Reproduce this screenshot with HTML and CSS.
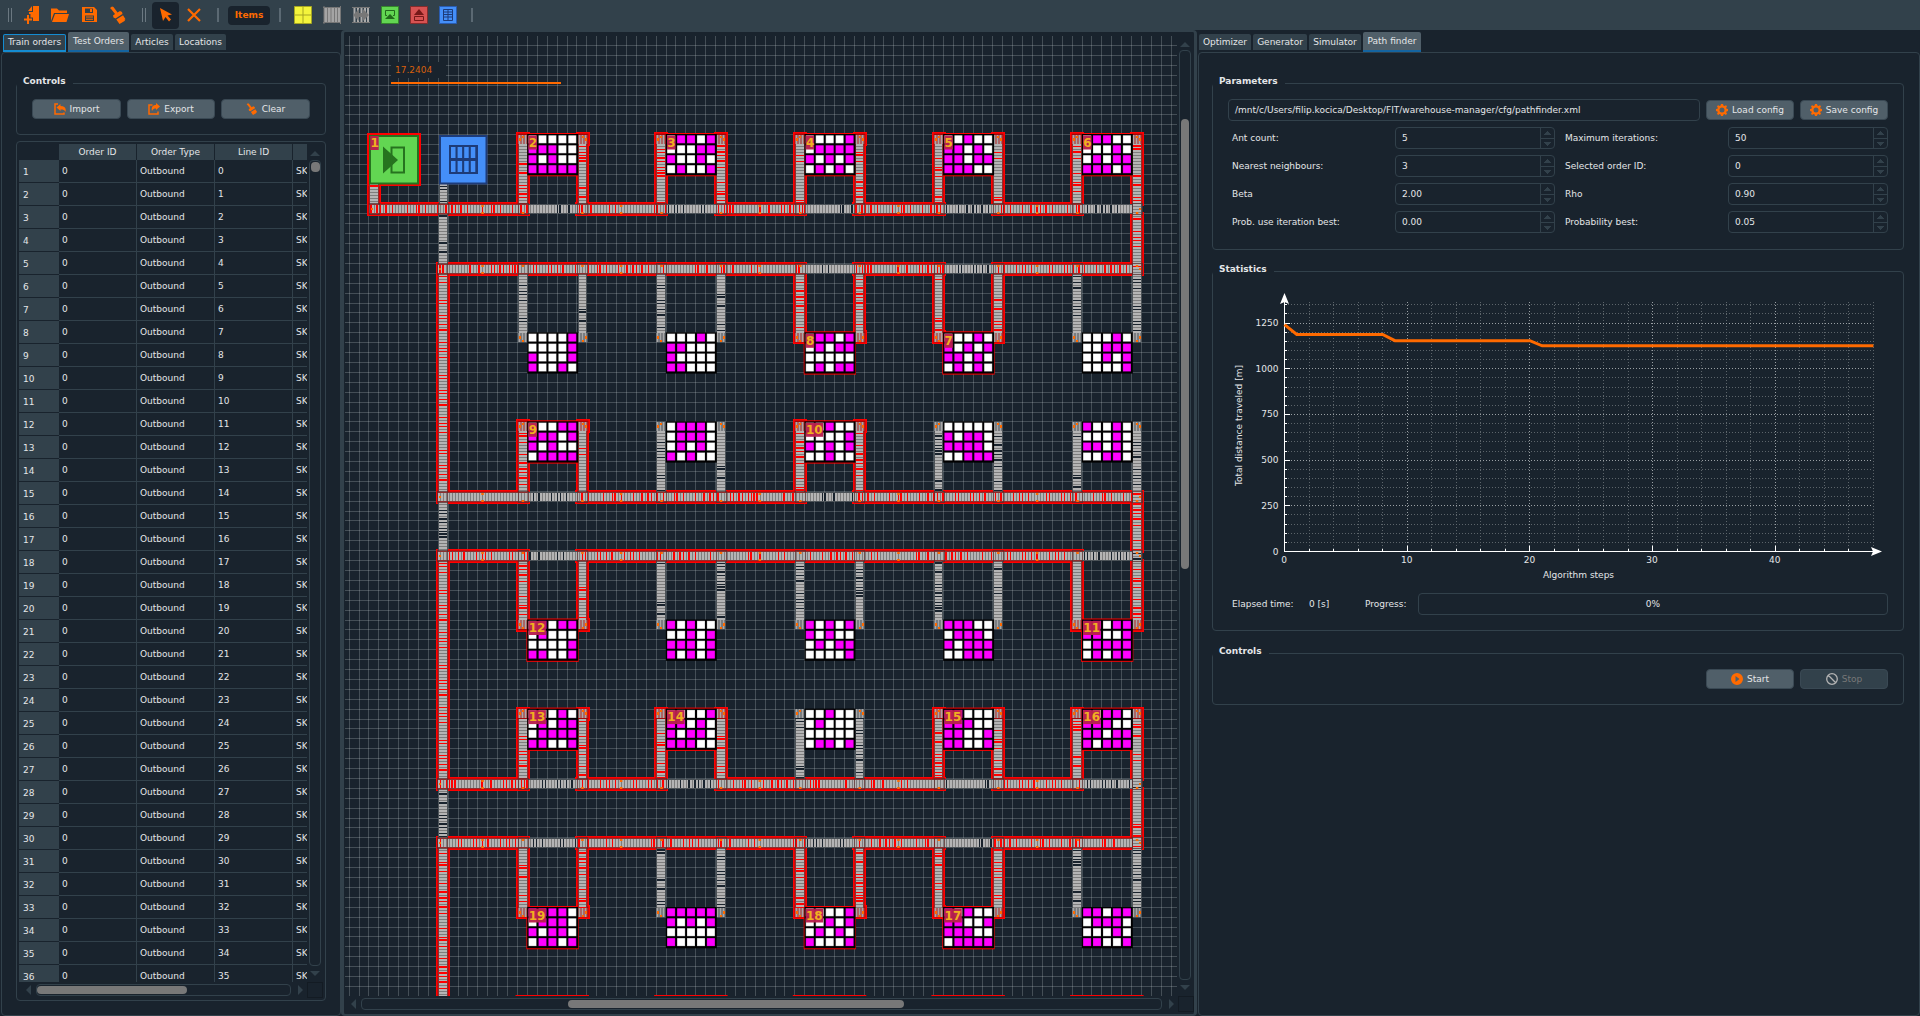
FILE: index.html
```html
<!DOCTYPE html>
<html lang="en">
<head>
<meta charset="utf-8">
<title>Warehouse manager</title>
<link rel="stylesheet" href="styles.css">
</head>
<body>
<svg class="defs" width="0" height="0">
  <symbol id="brush" viewBox="0 0 18 18"><path d="M1 2l2-1.500 1.500.5 4 5.500L11 5l2 1 .5 2-7 4.500-2-1-.5-2 2-1.500-3.500-4.500zM7.300 13.400l6.700-4.200 2.500 4-1 .5.500 1-5.500 3.300z"/></symbol>
  <symbol id="gear" viewBox="0 0 12 12"><path fill-rule="evenodd" d="M5 0h2l.4 1.600 1 .4L10 1.200 11 2.300 10.200 3.800l.3.900L12 5v2l-1.500.4-.3.900.8 1.500-1.100 1.100-1.500-.8-1 .3L7 12H5l-.4-1.600-1-.3-1.500.8L1 9.800l.8-1.500-.3-.9L0 7V5l1.500-.3.3-.9L1 2.300 2.100 1.200 3.600 2l1-.4zM6 3.500a2.500 2.500 0 100 5 2.500 2.500 0 000-5z"/></symbol>
</svg>

<header class="toolbar">
  <i class="grip"></i>
  <svg class="tool new" viewBox="0 0 18 18"><path d="M9 0h6v15H9v-3.500H6.500V8H5V6h4zM8 0v5H4zM3 9h2v3.500h3v2H5V18H3v-3.500H0v-2h3z"/></svg>
  <svg class="tool open" viewBox="0 0 18 18"><path d="M0 15V2.500h6l2 2h8V7H3zM4 8h14l-2.500 8H1z"/></svg>
  <svg class="tool save" viewBox="0 0 18 18"><path fill-rule="evenodd" d="M1 1h12l3 3v12H1zM4 2.500V7h8V2.500zM4 9.500V15h9V9.500z"/><path d="M9 3h2v3H9zM5 10.500h7v1H5zM5 12.700h7v1H5z"/></svg>
  <svg class="tool clean"><use href="#brush"/></svg>
  <i class="grip second"></i>
  <span class="picked"><svg viewBox="0 0 14 14"><path d="M1 0l12 6.500-4.500 1 3.500 4-2 2L6.500 9 4 13z"/></svg></span>
  <svg class="tool cross" viewBox="0 0 18 18"><path class="stroke" d="M3 3l12 12M15 3L3 15"/></svg>
  <i class="bar"></i>
  <span class="items">Items</span>
  <i class="bar after"></i>
  <div class="palette">
    <svg viewBox="0 0 18 18"><path fill="#f4f43c" stroke="#a6a623" d="M.5.500h17v17H.5z"/><path stroke="#a6a623" d="M9 0v18M0 9h18"/></svg>
    <svg viewBox="0 0 18 18"><path fill="#a4a4a4" d="M1 1h16v16H1z"/><path stroke="#777" d="M0 1.500h18M0 16.500h18M1 0v18M4.500 1v16M8 1v16M11.500 1v16M14.500 1v16M17.500 0v18"/></svg>
    <svg viewBox="0 0 18 18"><path stroke="#aaa" stroke-width="2" d="M2.500 1v16M6 1v16M9.500 1v16M13 1v16M16 1v16"/><path stroke="#777" d="M0 1.500h18M0 16.500h18"/><path fill="#777" d="M1 9l6-6v4h4V3l6 6-6 6v-4H7v4z"/></svg>
    <svg viewBox="0 0 18 18"><path fill="#62d652" stroke="#35862c" d="M.5.500h17v17H.5z"/><path fill="#226b1b" d="M4 13l5-5 5 5z"/><path fill="none" stroke="#226b1b" d="M6 9.500H4.500v-5h9v5H12"/></svg>
    <svg viewBox="0 0 18 18"><path fill="#d65252" stroke="#862c2c" d="M.5.500h17v17H.5z"/><path fill="#761818" d="M4 9l5-6 5 6z"/><path fill="none" stroke="#761818" d="M4.500 10.500h9v4h-9z"/></svg>
    <svg viewBox="0 0 18 18"><path fill="#448ff8" stroke="#2a5cb0" d="M.5.500h17v17H.5z"/><path fill="none" stroke="#1d3b78" d="M4.500 3.500h9v11h-9zM9 3.500v11M4 6h10M4 8.500h10M4 11h10"/></svg>
  </div>
  <i class="bar last"></i>
</header>

<main class="workspace">
  <section class="side">
    <nav class="tabs">
      <span class="tab focused">Train orders</span><span class="tab active test">Test Orders</span><span class="tab articles">Articles</span><span class="tab locations">Locations</span>
    </nav>
    <div class="pane">
      <div class="group io">
        <h2>Controls</h2>
        <div class="io-row">
          <button class="btn"><svg viewBox="0 0 12 12"><path fill="none" stroke="#ff6a00" stroke-width="1.500" d="M4 1H1v10h9V9.500"/><path d="M2.500 4.500L6.500 1v2c4 0 6 2 5 6-1-2-2-2.500-5-2.500V8z"/></svg>Import</button>
          <button class="btn mid"><svg viewBox="0 0 12 12"><path fill="none" stroke="#ff6a00" stroke-width="1.500" d="M4.500 2H1v9h9V8.500"/><path d="M12 3.500L8 0v2C5 2 3 4 4 8c1-2 2-2.500 4-2.500V7z"/></svg>Export</button>
          <button class="btn"><svg><use href="#brush"/></svg>Clear</button>
        </div>
      </div>
      <div class="table-frame">
        <div class="table-top">
          <div class="viewport">
            <table class="orders">
              <colgroup><col class="c-num"><col class="c-id"><col class="c-type"><col class="c-line"><col class="c-sku"></colgroup>
              <thead><tr><th class="corner"></th><th>Order ID</th><th>Order Type</th><th>Line ID</th><th></th></tr></thead>
              <tbody id="orders"></tbody>
            </table>
          </div>
          <div class="scroll vertical"><i class="arrow up"></i><div class="groove"><b class="thumb dot"></b></div><i class="arrow down"></i></div>
        </div>
        <div class="scroll-row"><div class="scroll horizontal"><i class="arrow left"></i><div class="groove"><b class="thumb wide"></b></div><i class="arrow right"></i></div><i class="corner-box"></i></div>
      </div>
    </div>
  </section>

  <section class="view">
    <div class="view-top">
      <svg id="map" class="map" viewBox="345 36 832 960"></svg>
      <div class="scroll vertical"><i class="arrow up"></i><div class="groove"><b class="thumb tall"></b></div><i class="arrow down"></i></div>
    </div>
    <div class="scroll-row"><div class="scroll horizontal"><i class="arrow left"></i><div class="groove"><b class="thumb long"></b></div><i class="arrow right"></i></div><i class="corner-box"></i></div>
  </section>

  <section class="tools">
    <nav class="tabs">
      <span class="tab t-opt">Optimizer</span><span class="tab t-gen">Generator</span><span class="tab t-sim">Simulator</span><span class="tab active t-path">Path finder</span>
    </nav>
    <div class="pane">
      <div class="group params">
        <h2>Parameters</h2>
        <div class="config">
          <div class="path">/mnt/c/Users/filip.kocica/Desktop/FIT/warehouse-manager/cfg/pathfinder.xml</div>
          <button class="btn"><svg><use href="#gear"/></svg>Load config</button>
          <button class="btn"><svg><use href="#gear"/></svg>Save config</button>
        </div>
        <div class="fields">
          <label>Ant count:</label><div class="spin">5<i></i></div><label>Maximum iterations:</label><div class="spin">50<i></i></div>
          <label>Nearest neighbours:</label><div class="spin">3<i></i></div><label>Selected order ID:</label><div class="spin">0<i></i></div>
          <label>Beta</label><div class="spin">2.00<i></i></div><label>Rho</label><div class="spin">0.90<i></i></div>
          <label>Prob. use iteration best:</label><div class="spin">0.00<i></i></div><label>Probability best:</label><div class="spin">0.05<i></i></div>
        </div>
      </div>
      <div class="group stats">
        <h2>Statistics</h2>
        <svg id="chart" class="chart" viewBox="1228 285 660 300"></svg>
        <div class="status"><span class="elapsed">Elapsed time:</span><span class="secs">0 [s]</span><span>Progress:</span><div class="progress">0%</div></div>
      </div>
      <div class="group run">
        <h2>Controls</h2>
        <div class="run-row">
          <button class="btn"><svg viewBox="0 0 12 12"><path fill-rule="evenodd" d="M6 0a6 6 0 100 12A6 6 0 006 0zM4.500 3l4 3-4 3z"/></svg>Start</button>
          <button class="btn off"><svg viewBox="0 0 12 12"><path fill="none" stroke="#b4b4b4" stroke-width="1.300" d="M6 .7a5.300 5.300 0 100 10.600A5.300 5.300 0 006 .7zM2.300 2.300l7.400 7.400"/></svg>Stop</button>
        </div>
      </div>
    </div>
  </section>
</main>
<script src="app.js"></script>
</body>
</html>
```
FILE: styles.css
```css
* { box-sizing: border-box; }
body {
  margin: 0; width: 1920px; height: 1016px; overflow: hidden;
  display: flex; flex-direction: column;
  background: #19232d; color: #e4e6e8;
  font: 9px/11px "DejaVu Sans", Verdana, sans-serif;
}
svg { display: block; flex: none; }
.defs { position: absolute; }

.toolbar { height: 30px; flex: none; display: flex; align-items: center; background: #32414b; fill: #ff6a00; }
.grip { width: 4px; height: 14px; margin-left: 8px; border: solid #6b7881; border-width: 0 1px; }
.grip.second { margin-left: 15px; }
.tool { width: 18px; height: 18px; }
.tool.new { margin-left: 12px; }
.tool.open { margin-left: 9px; }
.tool.save { margin-left: 12px; }
.tool.clean { margin-left: 10px; }
.tool.cross { margin-left: 6px; }
.stroke { stroke: #ff6a00; stroke-width: 2.200; fill: none; }
.picked { width: 27px; height: 27px; margin-left: 6px; border-radius: 4px; background: #19232d; padding: 6px 0 0 7px; }
.picked svg { width: 14px; height: 14px; }
.bar { width: 2px; height: 14px; margin-left: 14px; background: #5b6973; }
.bar.after { margin-left: 9px; }
.bar.last { margin-left: 14px; }
.items { width: 42px; height: 19px; margin: 1px 0 0 9px; border-radius: 4px; background: #19232d; color: #ff6a00; font-weight: bold; line-height: 19px; text-align: center; }
.palette { display: flex; gap: 11px; margin-left: 13px; }
.palette svg { width: 18px; height: 18px; }

.workspace { flex: 1; display: flex; min-height: 0; }
.side { width: 341px; padding-left: 1px; display: flex; flex-direction: column; }
.tabs { height: 22px; flex: none; display: flex; align-items: flex-start; padding: 4px 0 0 1px; gap: 2px; }
.side .tabs { padding-left: 2px; }
.tab { height: 16px; background: #32414b; border-radius: 2px 2px 0 0; line-height: 16px; text-align: center; width: 52px; white-space: nowrap; }
.tab.active { height: 20px; margin-top: -2px; line-height: 18px; background: #505f69; border-bottom: 2px solid #1464a0; }
.tab.focused { height: 18px; width: 63px; line-height: 14px; border: 1px solid #148cd2; border-bottom-width: 2px; }
.tab.test { width: 61px; }
.tab.articles { width: 42px; }
.tab.locations { width: 51px; }
.t-gen { width: 54px; }
.t-path { width: 58px; }
.pane { flex: 1; border: 1px solid #32414b; border-radius: 4px; min-height: 0; }

.group { border: 1px solid #32414b; border-radius: 4px; }
.group h2 { margin: -8px 0 0; padding: 0 7px 0 6px; width: fit-content; background: #19232d; font: bold 9px/11px "DejaVu Sans", Verdana, sans-serif; }
.btn { display: flex; align-items: center; justify-content: center; gap: 4px; height: 20px; padding: 0; background: #505f69; border: 1px solid #3a4954; border-radius: 4px; color: #e4e6e8; font: inherit; fill: #ff6a00; white-space: nowrap; }
.btn svg { width: 12px; height: 12px; }
.btn.off { background: #32414b; color: #787878; }

.io { margin: 30px 14px 0 14px; height: 52px; }
.io-row { display: grid; grid-template-columns: 89px 88px 89px; gap: 6px; padding: 12px 0 0 15px; }
.table-frame { margin: 6px 14px 0 14px; height: 860px; border: 1px solid #32414b; border-radius: 4px; padding: 2px; }
.table-top { display: flex; height: 838px; }
.viewport { width: 288px; overflow: hidden; }
.orders { table-layout: fixed; width: 400px; border-collapse: separate; border-spacing: 0; }
.c-num { width: 40px; } .c-id, .c-type, .c-line { width: 78px; } .c-sku { width: 126px; }
.orders th { height: 16px; padding: 0; background: #32414b; font-weight: normal; border-right: 1px solid #19232d; }
.orders th.corner { background: none; }
.orders td { height: 23px; padding: 0 3px 0 3px; border: solid #32414b; border-width: 0 1px 1px 0; }
.orders td:first-child { background: #32414b; border-right: 0; border-bottom-color: #19232d; padding: 2px 0 0 4px; }

.scroll { display: flex; align-items: center; }
.scroll.vertical { flex-direction: column; width: 16px; }
.scroll.horizontal { flex: 1; }
.scroll-row { display: flex; height: 16px; }
.groove { flex: 1; border: 1px solid #32414b; border-radius: 4px; }
.vertical .groove { width: 12px; }
.horizontal .groove { height: 12px; }
.thumb { display: block; background: #787878; border-radius: 4px; }
.thumb.dot { width: 9px; height: 10px; margin: 1px 0 0 .5px; }
.thumb.wide { width: 150px; height: 8px; margin: 1px 0 0 0; }
.thumb.tall { width: 8px; height: 450px; margin: 68px 0 0 1px; }
.thumb.long { width: 336px; height: 8px; margin: 1px 0 0 206px; }
.arrow { border: 5px solid transparent; flex: none; }
.arrow.up { border-top: 0; border-bottom-color: #32414b; margin: 7px 0 4px; }
.arrow.down { border-bottom: 0; border-top-color: #32414b; margin: 5px 0 6px; }
.arrow.left { border-left: 0; border-right-color: #32414b; margin: 0 5px 0 7px; }
.arrow.right { border-right: 0; border-left-color: #32414b; margin: 0 4px 0 7px; }
.corner-box { width: 16px; height: 16px; border: 1px solid #131b23; }

.view { width: 856px; border: 3px solid #32414b; border-width: 2px 3px 2px 3px; border-radius: 4px; padding: 4px 0 0 1px; }
.view-top { display: flex; height: 960px; }
.map { width: 832px; height: 960px; }
.map text { font: bold 12px "DejaVu Sans", Verdana, sans-serif; fill: #f0b020; }
.map text.measure { font: 9px "DejaVu Sans", Verdana, sans-serif; fill: #d8600c; }
.view .vertical .arrow.up { margin: 6px 0 3px; }
.view .horizontal .arrow.left { margin-left: 6px; }

.tools { flex: 1; padding-left: 1px; display: flex; flex-direction: column; }
.tools .group { margin-left: 13px; width: 692px; }
.params { margin-top: 30px; height: 167px; }
.config { display: grid; grid-template-columns: 472px 88px 88px; gap: 6px; align-items: center; padding: 12px 0 0 15px; }
.path { height: 22px; border: 1px solid #32414b; border-radius: 4px; line-height: 20px; padding-left: 6px; }
.fields { display: grid; grid-template-columns: 163px 160px 173px 160px; row-gap: 6px; padding: 6px 0 0 19px; }
.fields label { line-height: 22px; }
.fields label:nth-child(4n+3) { padding-left: 10px; }
.spin { height: 22px; border: 1px solid #32414b; border-radius: 4px; line-height: 20px; padding-left: 6px; display: flex; justify-content: space-between; }
.spin i { width: 14px; border-left: 1px solid #32414b; background:
  linear-gradient(#32414b, #32414b) 0 10px / 14px 1px no-repeat,
  conic-gradient(from 139deg at 50% 0, #32414b 82deg, transparent 0) 3px 3px / 7px 4px no-repeat,
  conic-gradient(from -41deg at 50% 100%, #32414b 82deg, transparent 0) 3px 14px / 7px 4px no-repeat; }
.stats { margin-top: 21px; height: 360px; }
.chart { width: 660px; height: 300px; margin: 10px 0 0 15px; }
.chart text { fill: #e4e6e8; font-size: 9px; }
.status { display: flex; line-height: 22px; padding: 8px 15px 0 19px; }
.elapsed { width: 77px; }
.secs { width: 56px; }
.progress { margin-left: auto; width: 470px; height: 22px; border: 1px solid #32414b; border-radius: 4px; line-height: 20px; text-align: center; }
.run { margin-top: 22px; height: 52px; }
.run-row { display: grid; grid-template-columns: 88px 88px; justify-content: end; gap: 6px; padding: 12px 15px 0 0; }
```
FILE: app.js
```js
// Order table
document.getElementById('orders').innerHTML = Array.from({ length: 36 }, (_, i) =>
  `<tr><td>${i + 1}</td><td>0</td><td>Outbound</td><td>${i}</td><td>SK</td></tr>`).join('');

// Warehouse layout
const UNIT = 9.9035;
const RED = '#ff0000', BG = '#19232d';
const out = [];
const rect = (x, y, w, h, fill, extra = '') =>
  out.push(`<rect x="${x.toFixed(1)}" y="${y.toFixed(1)}" width="${w.toFixed(1)}" height="${h.toFixed(1)}" fill="${fill}" ${extra}/>`);

for (let x = 349.15; x < 1177; x += UNIT) rect(Math.floor(x), 36, 1, 960, '#c8d0d4', 'opacity=".25"');
for (let y = 45.6; y < 996; y += UNIT) rect(345, Math.floor(y), 832, 1, '#c8d0d4', 'opacity=".25"');

rect(391, 62, 55, 16, BG);
out.push('<text class="measure" x="395" y="73">17.2404</text>');
rect(391, 82, 170, 2, '#ff6a00');

const colX = i => 527.2 + i * 14 * UNIT;
const rackY = [134, 332.3, 421.3, 619.5, 708.6, 907];
const laneY = [204, 264, 492, 551, 779, 838];
const halo = [], belts = [];

// A belt is a strip of rollers; on the route it gets a red halo and red gaps.
function belt(x, y, w, h, used) {
  const x0 = Math.round(x), y0 = Math.round(y);
  w = Math.round(x + w) - x0; h = Math.round(y + h) - y0;
  if (used) halo.push([x0, y0, w, h]);
  belts.push([x0, y0, w, h, used]);
}
function drawBelt([x, y, w, h, used]) {
  const across = w > h, len = across ? w : h;
  rect(x, y, w, h, used ? RED : BG);
  let seed = (x * 7 + y * 13) % 97;
  const strip = (p, size) => across ? `M${x + p} ${y + 1}h${size}v${h - 2}h-${size}z` : `M${x + 1} ${y + p}h${w - 2}v${size}h-${w - 2}z`;
  let roll = '', shade = '';
  for (let p = 0; p < len; p += 3) {
    seed = (seed * 37 + 11) % 101;
    const wide = seed % 9 === 1, gap = wide || seed % 4 === 0;
    roll += strip(p, Math.min(wide ? 1 : 2, len - p));
    if (!gap && p + 2 < len) shade += strip(p + 2, 1);
  }
  out.push(`<path fill="#b4b4b4" d="${roll}"/><path fill="#7d7d7d" d="${shade}"/>`);
  const rail = used ? '#8c3030' : '#4c5358';
  if (across) { rect(x, y, w, 1, rail); rect(x, y + h - 1, w, 1, rail); }
  else { rect(x, y, 1, h, rail); rect(x + w - 1, y, 1, h, rail); }
}

// Horizontal lanes; each entry lists the columns the route leaves out
const skipped = [[0, 1, 2, 3, 4], [2, 3], [0, 2], [0, 4], [0, 1, 3, 4], [0, 2, 3]];
laneY.forEach((y, r) => {
  let x = r ? 438 : 369;
  for (let c = 0; c < 5; c++) {
    const a = colX(c), b = a + 50;
    belt(x, y, a + .5 - x, 10.4, true);
    belt(a + .5, y, 49.5, 10.4, !skipped[r].includes(c));
    x = b;
  }
  belt(x, y, 10, 10.4, !(skipped[r].includes(4)));
});
belt(369, 184, 10, 20, true);
belt(439, 184, 9, 20, false);
belt(438, 214, 9.500, 50, false);
belt(438, 274, 9.500, 218, true);
belt(438, 502, 9.500, 49, false);
belt(438, 561, 9.500, 218, true);
belt(438, 789, 9.500, 49, false);
belt(438, 848, 9.500, 148, true);
[[214, 264], [502, 551], [789, 838]].forEach(([a, b]) => belt(colX(4) + 50.300, a, 10, b - a, true));

const racks = [
  ['2:WWWWW MMMWW MWMWW MMMMM', '3:WMMWM WWWMM MWWMW WMWWM', '4:WWWWM WMMMM MWMWM WMWMW', '5:WWMWW MMWMW MMWMM MMMWW', '6:WMMWW WWWMW WMWMM MMMWM'],
  [':WWWWM WWWWM MWWWM MWWMW', ':WWWMW MMWWW MWWWW MMWWW', '8:WMMWM WMWMM WWWWW WMWMM', '7:WWWMW MWMWM MMWMW WMWMW', ':WWWMW WWMMM WWMWM WWWWM'],
  ['9:WWWMM MMMWM MWMWW WMMMM', ':WMMMW WMMMW WMWMW MWMWW', '10:WWMWW WWWWM MWMWM WWMWW', ':WWWWW MWMMW MMMMW WWMMM', ':MWWMW WWWMW MMWMW WWMMW'],
  ['12:WMWMM WMWWW WWWWM MMWWM', ':MWMWW WWMWM MMMWM MWMWM', ':MWMWM MWMWW WMWMM WWWWM', ':MMMWW WMMMW MWMMM WWMMM', '11:MMWMM MMWWM WMMMM WMWMM'],
  ['13:WWWMW WMWMM WMMMM MMWWM', '14:WWWWM MMWMW MWMMW MMMWW', ':WWMWW WMWWW WWWWW WMMWM', '15:MMWWW MMMWW MMWWM MMWWM', '16:MWMMW MMMWW MMWMM MWMMM'],
  ['19:MMMMW WMMMW MWMMW WMMWM', ':MMMMM MWMWM WWWWW MWWWM', '18:WWWWM WWMWM WMWMW MWWWM', '17:MWMWW MMWWM MMMWW WMMMM', ':MMWMM WMMMW WWWMW MMWWM']
];
const frames = [], links = [];
racks.forEach((row, r) => row.forEach((def, c) => {
  const used = def[0] !== ':', y = rackY[r], x = colX(c);
  frames.push([x, y, def.split(':')[0], def.split(':')[1].split(' ')]);
  [x - 9.400, x + 50.300].forEach((bx, side) => {
    if (r % 2 === 0) belt(bx, y + 10, 9.700, laneY[r] - y - 10, used);
    else belt(bx, laneY[r] + 10, 9.700, y - laneY[r] - 9, used);
    links.push([bx, y + .5, side, r % 2, used]);
    if (used) halo.push([Math.round(bx), Math.round(y), 10, 10]);
  });
}));

halo.forEach(([x, y, w, h]) => rect(x - 2, y - 2, w + 4, h + 4, RED));
frames.forEach(([x, y, n]) => n && rect(x - .8, y - 1, 52.300, 43.300, RED));
halo.forEach(([x, y, w, h]) => rect(x - .4, y - .4, w + .8, h + .8, '#a0080a'));
rect(367, 133, 54, 53, RED);
belts.forEach(drawBelt);
links.forEach(([x, y, side, below, used]) => {
  x = Math.round(x); y = Math.round(y);
  rect(x, y, 10, 9, used ? '#b02020' : '#4c5358');
  for (let k = 0; k < 9; k += 3) rect(x + k + .5, y, 2, 9, '#a8a8a8');
  rect(x + (side ? 7 : 1), y + 3, 2, 3, '#ff6a00');
  rect(x + 4, below ? y + 7 : y + 1, 2, 2, '#ff6a00');
});

// Transfer points
laneY.forEach((y, r) => {
  const box = x => rect(Math.round(x) + .5, y - .5, 10, 11, 'none', 'stroke="#5a2c2c" stroke-opacity=".75"');
  const spot = (x, dy) => rect(x - 1, y + dy, 2.500, 2, '#ff6a00');
  for (let c = 0; c < 5; c++) {
    const x = colX(c);
    [x - 9.500, x + 50].forEach(v => { box(v); spot(v + 5, r % 2 ? 1 : 8); });
    spot(x - 44.900, 1); spot(x - 44.900, 8);
  }
  box(r ? 437 : 369);
  if (!r) box(438);
  rect(r ? 439 : 371, y + 4, 2, 2, '#ff6a00');
  rect(1139, y + 4, 2, 2, '#ff6a00');
});

function badge(x, y, n) {
  rect(x, y, n.length > 1 ? 17.500 : 8.500, 14, '#b81f4d', 'opacity=".97"');
  out.push(`<text x="${(x + .3).toFixed(1)}" y="${(y + 11).toFixed(1)}">${n}</text>`);
}
frames.forEach(([x, y, n, rows]) => {
  rect(x, y, 51, 41.300, '#000');
  rows.forEach((cells, j) => [...cells].forEach((v, i) => {
    const cx = x + 1.300 + i * 9.950, cy = y + 1.300 + j * 9.950;
    rect(cx, cy, 8, 8, v === 'M' ? '#d400d4' : '#c8c8c8');
    rect(cx + .5, cy + .5, 7, 7, v === 'M' ? '#ff00ff' : '#ffffff');
  }));
  if (n) badge(x + 1.200, y + 1.500, n);
});
for (let c = 0; c < 5; c++) rect(colX(c) - 11.700, 995, 73.500, 1, RED);

// Entry gate and storage box
rect(370, 136, 48, 47.500, '#62d652', 'stroke="#26731f" stroke-width="2"');
out.push('<path d="M383 146.500v27l15-13.500z" fill="#26731f"/><path d="M391.500 147.500h12.500v25h-12.500z" fill="none" stroke="#26731f" stroke-width="2"/>');
badge(370.2, 136, '1');
rect(440, 136, 46.500, 47.500, '#448ff8', 'stroke="#1d3b78" stroke-width="2"');
rect(449, 145, 29, 29, '#1d3b78');
for (let i = 0; i < 4; i++) for (let j = 0; j < 2; j++) rect(451 + i * 6.600, 147 + j * 14, 4.500, 11, '#448ff8');
document.getElementById('map').innerHTML = out.join('');

// Statistics chart
const X = s => 1284.5 + s * 12.270, Y = v => 551.5 - v * .1827;
const g = [];
const line = (x1, y1, x2, y2, style) => g.push(`<path d="M${x1.toFixed(1)} ${y1.toFixed(1)}L${x2.toFixed(1)} ${y2.toFixed(1)}" ${style}/>`);
const crisp = v => Math.floor(v) + .5;
for (let s = 2; s <= 48; s += 2) {
  const major = s % 10 === 0, x = crisp(X(s));
  line(x, 302, x, 551, `stroke="${major ? '#9aa0a4' : '#5c646a'}" stroke-dasharray="1 2"`);
  if (s < 48) line(x, 551, x, major ? 546 : 549, 'stroke="#fff"');
}
for (let v = 50; v <= 1350; v += 50) {
  const major = v % 250 === 0, y = crisp(Y(v));
  line(1285, y, 1873, y, `stroke="${major ? '#9aa0a4' : '#5c646a'}" stroke-dasharray="1 2"`);
  line(1285, y, major ? 1290 : 1287, y, 'stroke="#fff"');
}
line(1284.5, 300, 1284.5, 552, 'stroke="#fff"');
line(1284, 551.5, 1874, 551.5, 'stroke="#fff"');
g.push('<path fill="#fff" d="M1284.500 293l4.500 11-4.500-2-4.500 2zM1882 551.500l-11 4.500 2-4.500-2-4.500z"/>');
const pts = [[0, 1242], [1, 1188], [8, 1188], [9, 1154], [20, 1154], [21, 1126], [48, 1126]];
g.push(`<polyline fill="none" stroke="#ff6a00" stroke-width="3" points="${pts.map(([a, b]) => X(a) + ',' + Y(b)).join(' ')}"/>`);
for (let v = 0; v <= 1250; v += 250) g.push(`<text x="1278.500" y="${Y(v) + 3}" text-anchor="end">${v}</text>`);
for (let s = 0; s <= 40; s += 10) g.push(`<text x="${X(s) - .500}" y="563" text-anchor="middle">${s}</text>`);
g.push('<text x="1578.500" y="578" text-anchor="middle">Algorithm steps</text>');
g.push('<text transform="translate(1242 425.500) rotate(-90)" text-anchor="middle">Total distance traveled [m]</text>');
document.getElementById('chart').innerHTML = g.join('');
```
